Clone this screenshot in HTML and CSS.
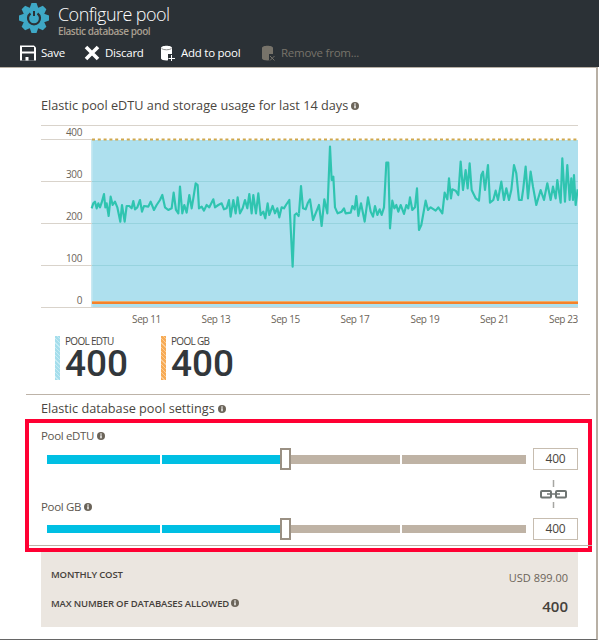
FILE: index.html
```html
<!DOCTYPE html>
<html lang="en">

<head>
    <meta charset="UTF-8">
    <title>Configure pool</title>
    <link rel="stylesheet" href="styles.css">
</head>

<body>
    <svg class="defs" width="0" height="0">
        <symbol id="info" viewBox="0 0 8 8">
            <circle cx="4" cy="4" r="4" fill="currentColor"></circle>
            <rect x="3.3" y="3.3" width="1.4" height="3" fill="#fff"></rect>
            <rect x="3.3" y="1.4" width="1.4" height="1.3" fill="#fff"></rect>
        </symbol>
    </svg>

    <header class="header">
        <div class="title-row">
            <svg class="gear" width="30" height="30" viewBox="0 0 30 30">
                <g fill="#3ea8c6">
                    <circle cx="15" cy="15" r="10.5"></circle>
                    <polygon points="12.5,0 17.5,0 20,7 20,23 17.5,30 12.5,30 10,23 10,7"></polygon>
                    <polygon points="12.5,0 17.5,0 20,7 20,23 17.5,30 12.5,30 10,23 10,7" transform="rotate(45 15 15)"></polygon>
                    <polygon points="12.5,0 17.5,0 20,7 20,23 17.5,30 12.5,30 10,23 10,7" transform="rotate(90 15 15)"></polygon>
                    <polygon points="12.5,0 17.5,0 20,7 20,23 17.5,30 12.5,30 10,23 10,7" transform="rotate(135 15 15)"></polygon>
                </g>
                <path d="M11.5 10.5 A6 6 0 1 0 18.5 10.5" fill="none" stroke="#2b3136" stroke-width="2.2"></path>
                <path d="M15 8 v5" stroke="#2b3136" stroke-width="2"></path>
            </svg>
            <div>
                <div class="title">Configure pool</div>
                <div class="subtitle">Elastic database pool</div>
            </div>
        </div>
        <div class="toolbar">
            <div class="tool">
                <svg width="16" height="16" viewBox="0 0 16 16">
                    <path d="M0 0.5 H14 L16 2.5 V15.5 H0 Z" fill="#fff"></path>
                    <rect x="2" y="2" width="12" height="4.5" fill="#2b3136"></rect>
                    <rect x="2" y="8.5" width="12" height="7" fill="#2b3136"></rect>
                    <rect x="5.5" y="12" width="3" height="3.5" fill="#fff"></rect>
                </svg>
                Save
            </div>
            <div class="tool">
                <svg width="16" height="16" viewBox="0 0 16 16">
                    <path d="M2 2 L14 14 M14 2 L2 14" stroke="#fff" stroke-width="3.6"></path>
                </svg>
                Discard
            </div>
            <div class="tool">
                <svg width="16" height="16" viewBox="0 0 16 16">
                    <path d="M1 3 C1 0 12 0 12 3 V13.5 C12 16 1 16 1 13.5 Z" fill="#fff"></path>
                    <path d="M1.5 3.6 C4 5.2 9 5.2 11.5 3.6" fill="none" stroke="#8c8c8c"></path>
                    <rect x="8" y="9" width="8" height="7" fill="#2b3136"></rect>
                    <path d="M11.5 10 V16 M8.5 13.5 H15" stroke="#fff"></path>
                </svg>
                Add to pool
            </div>
            <div class="tool tool-off">
                <svg width="16" height="16" viewBox="0 0 16 16">
                    <path d="M2 3 C2 0 13 0 13 3 V13.5 C13 16 2 16 2 13.5 Z" fill="#77736a"></path>
                    <rect x="9" y="9" width="7" height="7" fill="#2b3136"></rect>
                    <path d="M10 11 L14.5 15.5 M14.5 11 L10 15.5" stroke="#77736a"></path>
                </svg>
                Remove from...
            </div>
        </div>
    </header>

    <div class="blade">
        <h2 class="heading heading-top">Elastic pool eDTU and storage usage for last 14 days <svg class="info"><use href="#info"></use></svg></h2>

        <svg class="chart" width="537" height="205" viewBox="41 120 537 205">
            <rect x="92" y="140" width="486" height="167" fill="#aee0ee"></rect>
            <rect x="91" y="140" width="1.5" height="167" fill="#c9e9f2"></rect>
            <g class="grid">
                <path d="M41 125.5 H578"></path>
                <path d="M41 139.5 H92"></path>
                <path d="M41 181.5 H92"></path>
                <path d="M41 223.5 H92"></path>
                <path d="M41 265.5 H92"></path>
                <path d="M41 307.5 H578"></path>
            </g>
            <g class="grid-in">
                <path d="M92 181.5 H578"></path>
                <path d="M92 223.5 H578"></path>
                <path d="M92 265.5 H578"></path>
            </g>
            <path d="M92 139.5 H578" stroke="#cfa84e" stroke-width="2" stroke-dasharray="3 2.8"></path>
            <path d="M92 301.5 H578" stroke="#f1ab66" stroke-width="1"></path>
            <path d="M92 303 H578" stroke="#f5822a" stroke-width="2"></path>
            <polyline class="usage" transform="translate(0 120) scale(0.3333)" points="275,265 280,250 285,245 290,265 295,250 300,262 305,248 312,222 316,262 320,250 326,288 332,230 338,255 345,245 352,262 361,305 366,255 374,305 380,258 388,258 395,265 400,243 405,268 412,262 420,240 426,275 432,258 445,260 452,245 462,270 470,255 480,240 487,225 495,262 505,270 515,265 521,218 528,270 535,280 540,200 547,280 553,255 560,278 568,225 575,265 580,235 587,190 593,195 597,265 605,260 612,272 620,255 628,262 640,238 645,262 655,255 665,250 672,268 680,265 687,240 692,290 700,240 707,280 713,232 720,280 728,265 735,240 742,265 748,222 755,280 760,225 768,280 775,220 782,285 790,275 796,295 803,250 808,285 818,258 825,280 832,265 838,292 845,262 852,265 858,255 868,240 878,440 884,285 890,280 896,288 897,280"></polyline>
            <polyline class="usage" transform="translate(299 120) scale(0.3333)" points="0,280 6,198 12,265 20,268 26,250 33,238 42,300 50,280 60,255 68,318 76,238 85,280 93,80 98,180 103,170 108,262 116,280 128,275 135,265 140,280 155,278 160,258 167,268 172,228 178,288 186,250 197,305 207,232 215,275 222,290 228,258 235,285 242,268 248,285 255,262 262,128 268,128 273,325 280,242 286,265 292,255 298,275 305,255 315,282 322,255 328,265 333,232 340,270 348,262 354,205 360,330 367,315 380,242 387,270 395,262 410,272 418,262 430,280 437,218 445,238 450,175 456,235 460,208 470,212 478,225 485,125 492,210 500,150 506,205 512,130 518,210 530,235 540,242 547,165 552,155 558,210 567,135 573,248 583,240 590,212 597,240 607,185 615,240 622,205 630,240 637,210 645,135 652,160 660,240 668,240 673,205 680,140 687,235 695,155 702,200 712,255 725,210 735,240 745,190 755,240 762,200 770,235 775,180 785,248 790,115 798,245 805,135 812,240 817,175 822,240 825,165 830,255 836,208"></polyline>
            <g class="axis-y">
                <text x="82" y="136">400</text>
                <text x="82" y="178">300</text>
                <text x="82" y="220">200</text>
                <text x="82" y="262">100</text>
                <text x="82" y="304">0</text>
            </g>
            <g class="axis-x">
                <text x="146.5" y="323">Sep 11</text>
                <text x="216" y="323">Sep 13</text>
                <text x="285.5" y="323">Sep 15</text>
                <text x="355" y="323">Sep 17</text>
                <text x="425" y="323">Sep 19</text>
                <text x="494.5" y="323">Sep 21</text>
                <text x="563.5" y="323">Sep 23</text>
            </g>
        </svg>

        <div class="legend">
            <div class="legend-item">
                <span class="swatch swatch-blue"></span>
                <div>
                    <div class="legend-label">POOL EDTU</div>
                    <div class="legend-value">400</div>
                </div>
            </div>
            <div class="legend-item">
                <span class="swatch swatch-orange"></span>
                <div>
                    <div class="legend-label">POOL GB</div>
                    <div class="legend-value">400</div>
                </div>
            </div>
        </div>

        <div class="settings">
            <h2 class="heading">Elastic database pool settings <svg class="info"><use href="#info"></use></svg></h2>
        </div>

        <section class="highlight">
            <div class="field-label field-label-first">Pool eDTU <svg class="info"><use href="#info"></use></svg></div>
            <div class="slider-row">
                <div class="slider">
                    <div class="seg seg-on seg-a"></div>
                    <div class="seg seg-on seg-b"></div>
                    <div class="seg seg-off seg-c"></div>
                    <div class="seg seg-off seg-d"></div>
                    <div class="handle"></div>
                </div>
                <div class="value-box">400</div>
            </div>
            <div class="link-row">
                <div class="field-label">Pool GB <svg class="info"><use href="#info"></use></svg></div>
                <svg class="link" width="27" height="28" viewBox="0 0 27 28">
                    <path d="M13.5 0 V7 M13.5 22 V28" stroke="#a6a6a2" stroke-width="1.5"></path>
                    <rect x="1" y="11" width="10" height="6.5" rx="1" fill="none" stroke="#6f7573" stroke-width="2"></rect>
                    <rect x="16" y="11" width="10" height="6.5" rx="1" fill="none" stroke="#6f7573" stroke-width="2"></rect>
                    <path d="M7 14 H20" stroke="#6f7573" stroke-width="1.5"></path>
                </svg>
            </div>
            <div class="slider-row">
                <div class="slider slider-thin">
                    <div class="seg seg-on seg-a"></div>
                    <div class="seg seg-on seg-b"></div>
                    <div class="seg seg-off seg-c"></div>
                    <div class="seg seg-off seg-d"></div>
                    <div class="handle"></div>
                </div>
                <div class="value-box">400</div>
            </div>
            <div class="rule"></div>
        </section>

        <div class="cost">
            <div class="cost-row">
                <span class="cost-label">MONTHLY COST</span>
                <span class="cost-price">USD 899.00</span>
            </div>
            <div class="cost-row cost-row-max">
                <span class="cost-label">MAX NUMBER OF DATABASES ALLOWED <svg class="info"><use href="#info"></use></svg></span>
                <span class="cost-count">400</span>
            </div>
        </div>
    </div>
</body>

</html>
```

FILE: styles.css
```css
body {
    margin: 0;
    background-color: #ffffff;
    font-family: "Open Sans", "Noto Sans", sans-serif;
    color: #4a4640;
}

.defs {
    position: absolute;
}

.header {
    height: 67px;
    background-color: #2b3136;
    overflow: hidden;
}

.title-row {
    display: flex;
    height: 40px;
    padding-left: 19px;
    padding-top: 3px;
    box-sizing: border-box;
}

.gear {
    margin-right: 9px;
}

.title {
    font-size: 18px;
    font-weight: 300;
    line-height: 23px;
    letter-spacing: -0.55px;
    color: #ffffff;
}

.subtitle {
    font-size: 10px;
    font-weight: 600;
    line-height: 11px;
    letter-spacing: -0.45px;
    color: #a89f90;
}

.toolbar {
    display: grid;
    grid-template-columns: 64px 76px 100px auto;
    padding-left: 20px;
    margin-top: 4px;
}

.tool {
    display: flex;
    align-items: center;
    gap: 5px;
    font-size: 11.5px;
    line-height: 18px;
    letter-spacing: -0.25px;
    color: #ffffff;
}

.tool-off {
    color: #77736a;
}

.blade {
    width: 598px;
    height: 573px;
    box-sizing: border-box;
    border-right: 2px solid #b8b0a5;
    border-bottom: 1px solid #666666;
    border-top: 1px solid #b8b0a5;
}

.heading {
    margin: 0;
    font-size: 12.7px;
    font-weight: 400;
    line-height: 18px;
    color: #4a4640;
    padding-left: 41px;
}

.heading-top {
    margin-top: 28px;
}

.info {
    width: 8px;
    height: 8px;
    color: #6b6459;
}

.chart {
    display: block;
    margin-top: 6px;
    margin-left: 41px;
}

.grid path {
    stroke: #d9d3cb;
}

.grid-in path {
    stroke: #97d3de;
}

.usage {
    fill: none;
    stroke: #2fc4b0;
    stroke-width: 6.5;
    stroke-linejoin: round;
}

.axis-y text,
.axis-x text {
    font-size: 10px;
    letter-spacing: -0.4px;
    fill: #6b6459;
}

.axis-y text {
    text-anchor: end;
}

.axis-x text {
    text-anchor: middle;
}

.legend {
    display: flex;
    margin-top: 11px;
    margin-left: 55px;
    height: 44px;
}

.legend-item {
    display: flex;
    width: 106px;
}

.swatch {
    width: 5px;
    height: 44px;
    margin-right: 5px;
}

.swatch-blue {
    background: repeating-linear-gradient(45deg, #a5deec 0, #a5deec 2px, #c6ebf4 2px, #c6ebf4 3px);
}

.swatch-orange {
    background: repeating-linear-gradient(45deg, #f7ab55 0, #f7ab55 2px, #fbcb94 2px, #fbcb94 3px);
}

.legend-label {
    font-size: 10px;
    line-height: 10px;
    letter-spacing: -0.7px;
    color: #4a4640;
}

.legend-value {
    font-family: Roboto, "Open Sans", sans-serif;
    font-size: 37px;
    font-weight: 500;
    line-height: 36px;
    color: #32373b;
}

.settings {
    margin-top: 14px;
    margin-left: 26px;
    width: 564px;
    border-top: 1px solid #bdb3a8;
    padding-top: 4px;
}

.settings .heading {
    padding-left: 15px;
}

.highlight {
    width: 567px;
    margin-top: 2px;
    margin-left: 25px;
    box-sizing: border-box;
    border: 4px solid #ff0033;
    height: 133px;
    padding-left: 12px;
}

.field-label {
    font-size: 11.5px;
    line-height: 18px;
    letter-spacing: -0.35px;
    color: #5c564e;
}

.field-label-first {
    padding-top: 4px;
    margin-bottom: 3px;
}

.slider-row {
    display: flex;
    align-items: center;
    height: 22px;
}

.slider {
    position: relative;
    display: flex;
    width: 479px;
    height: 9px;
    margin-left: 6px;
    margin-right: 7px;
}

.slider-thin {
    height: 8px;
}

.seg-on {
    background-color: #00bfe3;
}

.seg-off {
    background-color: #bfb3a5;
}

.seg-a {
    width: 113px;
    margin-right: 2px;
}

.seg-b {
    width: 123px;
}

.seg-c {
    width: 115px;
    margin-right: 2px;
}

.seg-d {
    width: 124px;
}

.handle {
    position: absolute;
    left: 233px;
    top: 50%;
    width: 11px;
    height: 22px;
    margin-top: -11px;
    box-sizing: border-box;
    border: 2px solid #9a9083;
    background-color: #ffffff;
}

.value-box {
    width: 45px;
    height: 22px;
    box-sizing: border-box;
    border: 1px solid #c7bdb0;
    font-size: 12px;
    line-height: 20px;
    letter-spacing: -0.2px;
    text-align: center;
    color: #4a4640;
}

.link-row {
    display: flex;
    justify-content: space-between;
    height: 38px;
    margin-top: 10px;
    padding-right: 21px;
    box-sizing: border-box;
}

.link-row .field-label {
    align-self: flex-end;
    padding-bottom: 2px;
}

.rule {
    margin-top: 5px;
    margin-left: -12px;
    margin-right: -4px;
    border-top: 1px solid #bdb3a8;
}

.cost {
    width: 537px;
    height: 75px;
    margin-left: 41px;
    padding: 13px 10px 0 10px;
    box-sizing: border-box;
    background-color: #ebe6e0;
}

.cost-row {
    display: flex;
    justify-content: space-between;
    align-items: center;
    height: 18px;
}

.cost-row-max {
    margin-top: 11px;
}

.cost-label {
    font-size: 9.5px;
    font-weight: 600;
    letter-spacing: -0.15px;
    color: #45413b;
}

.cost-price {
    font-size: 11px;
    color: #6b6459;
    padding-top: 6px;
}

.cost-count {
    font-size: 15px;
    font-weight: 600;
    color: #45413b;
    padding-top: 6px;
}
```
